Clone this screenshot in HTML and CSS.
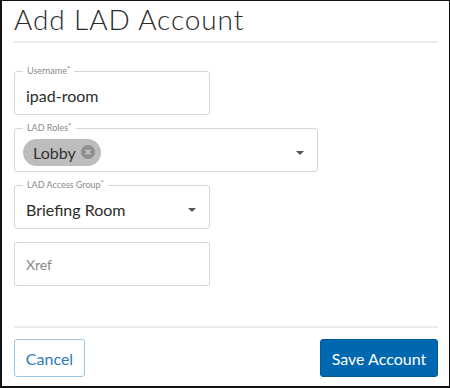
FILE: index.html
```html
<!DOCTYPE html>
<html lang="en">
<head>
    <meta charset="UTF-8">
    <meta name="viewport" content="width=device-width, initial-scale=1.0">
    <title>Add LAD Account</title>
    <link rel="stylesheet" href="styles.css">
</head>
<body>

<div class="dialog">
    <h1 class="title">Add LAD Account</h1>

    <form class="form">
        <div class="field narrow">
            <span class="label">Username<sup>*</sup></span>
            <span class="value">ipad-room</span>
        </div>

        <div class="field wide">
            <span class="label">LAD Roles<sup>*</sup></span>
            <span class="chip">Lobby
                <svg class="chip-x" width="14" height="14" viewBox="0 0 14 14">
                    <circle cx="7" cy="7" r="7" fill="#8e8e8e"/>
                    <path d="M4.5 4.5 L9.5 9.5 M9.5 4.5 L4.5 9.5" stroke="#c9c9c9" stroke-width="1.6"/>
                </svg>
            </span>
            <span class="caret"></span>
        </div>

        <div class="field narrow">
            <span class="label">LAD Access Group<sup>*</sup></span>
            <span class="value">Briefing Room</span>
            <span class="caret"></span>
        </div>

        <div class="field narrow">
            <span class="value placeholder">Xref</span>
        </div>
    </form>

    <div class="footer">
        <button class="btn btn-outline">Cancel</button>
        <button class="btn btn-primary">Save Account</button>
    </div>
</div>

</body>
</html>
```

FILE: styles.css
```css
body {
    margin: 0;
    padding: 0;
    font-family: 'Lato', 'Open Sans', sans-serif;
    background-color: white;
    color: #333;
}
.dialog {
    box-sizing: border-box;
    width: 450px;
    height: 388px;
    border: 1px solid #111;
    border-left-width: 2px;
    border-bottom-width: 2px;
    padding: 0 11px 0 12px;
    display: flex;
    flex-direction: column;
}
.title {
    margin: 0;
    padding: 0;
    font-size: 28px;
    line-height: 36px;
    font-weight: 300;
    color: #2b2b2b;
    letter-spacing: 0.9px;
    height: 40px;
    border-bottom: 2px solid #ececec;
}
.form {
    display: flex;
    flex-direction: column;
    gap: 13px;
    padding-top: 28px;
    flex: 1;
}
.field {
    position: relative;
    box-sizing: border-box;
    height: 44px;
    border: 1px solid #d6d6d6;
    border-radius: 3px;
    display: flex;
    align-items: center;
    padding: 0 11px;
}
.narrow {
    width: 196px;
}
.wide {
    width: 304px;
    padding-left: 8px;
}
.label {
    position: absolute;
    top: -7px;
    left: 8px;
    padding: 0 4px;
    background: white;
    font-size: 9px;
    color: #8a8a8a;
    line-height: 12px;
}
.label sup {
    font-size: 8px;
    vertical-align: top;
    line-height: 8px;
}
.value {
    font-size: 16px;
    color: #2b2b2b;
    padding-top: 4px;
}
.placeholder {
    font-size: 14px;
    color: #888;
    padding-top: 0;
}
.chip {
    display: inline-flex;
    align-items: center;
    gap: 5px;
    height: 27px;
    box-sizing: border-box;
    padding: 0 6px 0 10px;
    background: #bdbdbd;
    border-radius: 14px;
    font-size: 16px;
    color: #333;
    margin-top: 4px;
}
.caret {
    position: absolute;
    right: 13px;
    top: 22px;
    width: 0;
    height: 0;
    border-left: 4px solid transparent;
    border-right: 4px solid transparent;
    border-top: 4px solid #555;
}
.footer {
    border-top: 2px solid #ececec;
    display: flex;
    justify-content: space-between;
    padding-top: 11px;
    height: 47px;
}
.btn {
    height: 38px;
    border-radius: 3px;
    font-family: 'Lato', 'Open Sans', sans-serif;
    font-size: 16px;
    padding: 0 8px;
    cursor: pointer;
}
.btn-outline {
    width: 71px;
    background: white;
    border: 1px solid #9fc6e3;
    color: #2a7bbd;
}
.btn-primary {
    width: 118px;
    background: #0068b0;
    border: 1px solid #005a99;
    color: white;
}
```
